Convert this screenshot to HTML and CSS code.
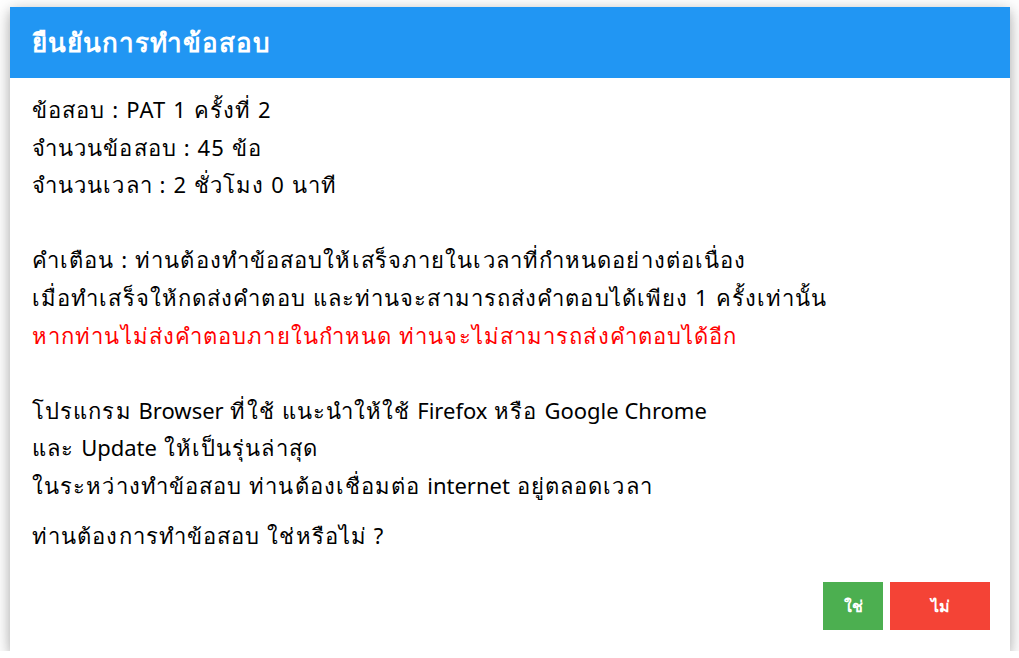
FILE: index.html
```html
<!DOCTYPE html>
<html>
<head>
    <title>ยืนยันการทำข้อสอบ</title>
    <meta charset="utf-8">
    <link rel="stylesheet" href="styles.css">
</head>
<body>
    <div class="modal">
        <div class="modal-header">
            <h2>ยืนยันการทำข้อสอบ</h2>
        </div>
        <div class="modal-body">
            <p>
                ข้อสอบ : PAT 1 ครั้งที่ 2<br>
                จำนวนข้อสอบ : 45 ข้อ<br>
                จำนวนเวลา : 2 ชั่วโมง 0 นาที<br>
                <br>
                คำเตือน : ท่านต้องทำข้อสอบให้เสร็จภายในเวลาที่กำหนดอย่างต่อเนื่อง<br>
                เมื่อทำเสร็จให้กดส่งคำตอบ และท่านจะสามารถส่งคำตอบได้เพียง 1 ครั้งเท่านั้น<br>
                <span class="warn">หากท่านไม่ส่งคำตอบภายในกำหนด ท่านจะไม่สามารถส่งคำตอบได้อีก</span><br>
                <br>
                โปรแกรม <span class="en">Browser</span> ที่ใช้ แนะนำให้ใช้ <span class="en">Firefox</span> หรือ <span class="en">Google Chrome</span><br>
                และ <span class="en">Update</span> ให้เป็นรุ่นล่าสุด<br>
                ในระหว่างทำข้อสอบ ท่านต้องเชื่อมต่อ <span class="en">internet</span> อยู่ตลอดเวลา
            </p>
            <p>ท่านต้องการทำข้อสอบ ใช่หรือไม่ ?</p>
        </div>
        <div class="modal-footer">
            <button class="btn btn-yes">ใช่</button>
            <button class="btn btn-no">ไม่</button>
        </div>
    </div>
</body>
</html>
```

FILE: styles.css
```css
body {
    margin: 0;
    background: #fff;
    font-family: "Noto Sans", "DejaVu Sans", sans-serif;
    color: #000;
}

.modal {
    width: 1000px;
    margin: 7px 0 0 10px;
    background: #fff;
    box-shadow: 0 4px 10px 0 rgba(0, 0, 0, 0.2), 0 4px 20px 0 rgba(0, 0, 0, 0.19);
}

.modal-header {
    background: #2196f3;
    color: #fff;
    height: 71px;
    display: flex;
    align-items: center;
    padding: 0 22px;
}

.modal-header h2 {
    margin: 0;
    font-size: 26px;
    letter-spacing: 1px;
    font-weight: bold;
}

.modal-body {
    padding: 13px 22px 0;
    font-size: 22px;
    letter-spacing: 1.1px;
    line-height: 37.6px;
}

.modal-body p {
    margin: 0 0 12px;
}

.en {
    letter-spacing: 0;
}

.warn {
    color: #f00;
}

.modal-footer {
    display: flex;
    justify-content: flex-end;
    gap: 7px;
    padding: 16px 20px 21px;
}

.btn {
    border: none;
    height: 48px;
    color: #fff;
    font-family: inherit;
    font-size: 16px;
    font-weight: bold;
    cursor: pointer;
}

.btn-yes {
    width: 60px;
    background: #4caf50;
}

.btn-no {
    width: 100px;
    background: #f44336;
}
```
